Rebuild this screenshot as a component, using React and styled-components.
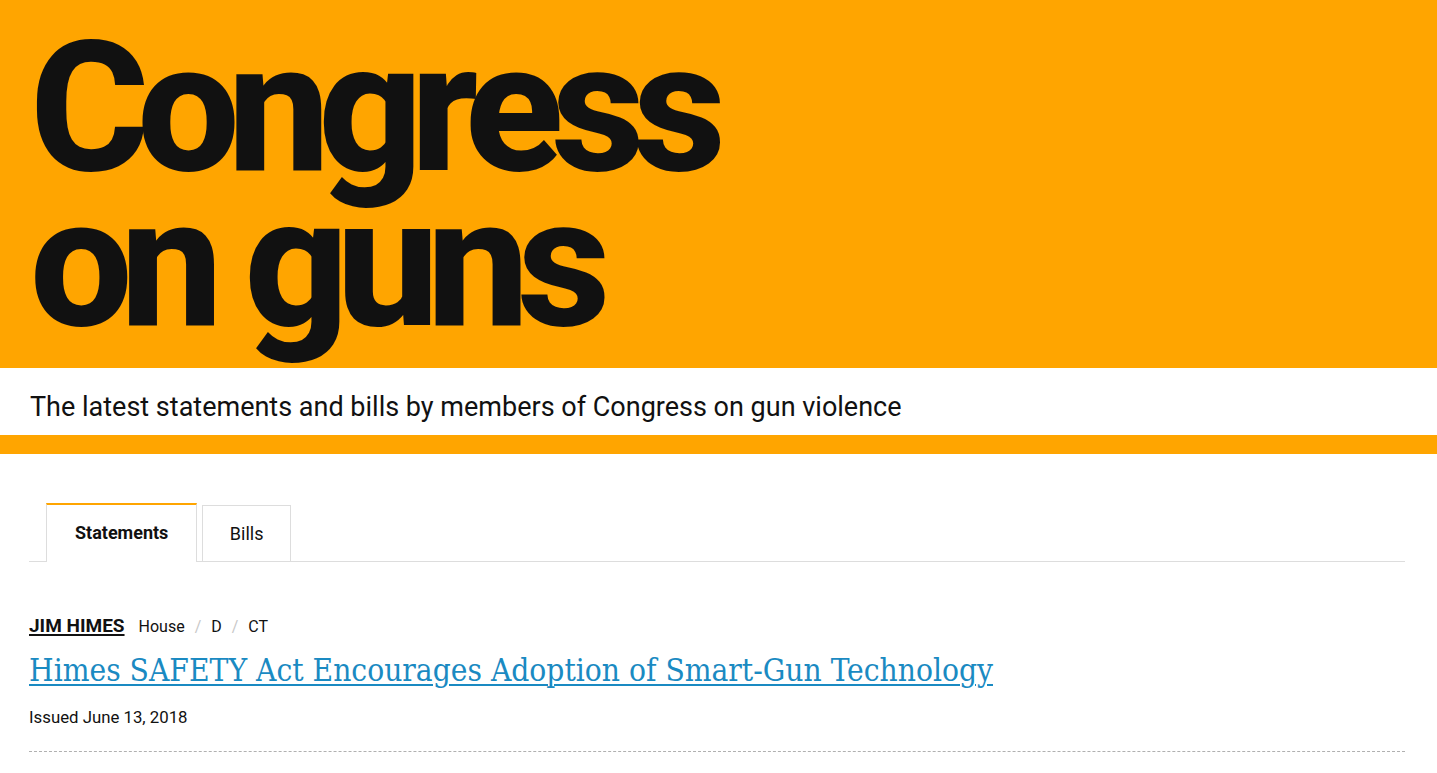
import React from "react";
import styled, { createGlobalStyle } from "styled-components";

const ORANGE = "#ffa500";
const INK = "#111111";

const GlobalStyle = createGlobalStyle`
  html, body { margin: 0; padding: 0; background: #ffffff; }
  body { font-family: Roboto, "Noto Sans", sans-serif; color: ${INK}; }
  * { box-sizing: border-box; }
`;

const Masthead = styled.header`
  background: ${ORANGE};
  height: 368px;
  padding: 30px 0 0 30px;
`;

const Title = styled.h1`
  margin: 0;
  font-family: Roboto, "Noto Sans", sans-serif;
  font-weight: 800;
  font-size: 182px;
  line-height: 155px;
  letter-spacing: -12px;
  color: ${INK};
`;

const Tagline = styled.div`
  background: #ffffff;
  border-bottom: 19px solid ${ORANGE};
  padding: 23px 0 12px 30px;
  font-family: Roboto, "Noto Sans", sans-serif;
  font-size: 27px;
  line-height: 32px;
  color: ${INK};
`;

const Main = styled.main`
  padding: 49px 32px 0 29px;
`;

const TabBar = styled.nav`
  display: flex;
  align-items: flex-end;
  gap: 5px;
  padding-left: 17px;
  border-bottom: 1px solid #dddddd;
`;

const Tab = styled.button`
  display: flex;
  align-items: center;
  justify-content: center;
  height: ${(p) => (p.$active ? "59px" : "56px")};
  margin-bottom: ${(p) => (p.$active ? "-1px" : "0")};
  padding: ${(p) => (p.$active ? "0 28px 2px" : "0 26.5px")};
  background: #ffffff;
  border: 1px solid #dddddd;
  border-top: ${(p) => (p.$active ? `2px solid ${ORANGE}` : "1px solid #dddddd")};
  border-bottom: none;
  font-family: Roboto, "Noto Sans", sans-serif;
  font-size: 18px;
  font-weight: ${(p) => (p.$active ? 700 : 400)};
  color: ${INK};
  cursor: pointer;
`;

const Item = styled.article`
  margin-top: 52px;
  padding-bottom: 24px;
  border-bottom: 1px dashed #b0b0b0;
`;

const Meta = styled.div`
  display: flex;
  align-items: baseline;
  font-family: Roboto, "Noto Sans", sans-serif;
  font-size: 16px;
  line-height: 24px;
  color: ${INK};
`;

const Member = styled.a`
  font-size: 19px;
  font-weight: 700;
  color: ${INK};
  text-decoration: underline;
  text-decoration-thickness: 2px;
  text-underline-offset: 2px;
  margin-right: 14px;
`;

const Sep = styled.span`
  color: #c8c8c8;
  margin: 0 10px;
`;

const Headline = styled.a`
  display: block;
  margin-top: 12px;
  font-family: "DejaVu Serif Condensed", "DejaVu Serif", serif;
  font-stretch: condensed;
  font-size: 31.4px;
  line-height: 38px;
  color: #1a8ac2;
  text-decoration: underline;
  text-decoration-thickness: 2px;
  text-underline-offset: 3px;
`;

const Issued = styled.div`
  margin-top: 18px;
  font-family: Roboto, "Noto Sans", sans-serif;
  font-size: 16.8px;
  line-height: 20px;
  color: ${INK};
`;

export default function App() {
  return (
    <>
      <GlobalStyle />
      <Masthead>
        <Title>
          Congress
          <br />
          on guns
        </Title>
      </Masthead>
      <Tagline>The latest statements and bills by members of Congress on gun violence</Tagline>
      <Main>
        <TabBar>
          <Tab $active>Statements</Tab>
          <Tab>Bills</Tab>
        </TabBar>
        <Item>
          <Meta>
            <Member href="#">JIM HIMES</Member>
            <span>House</span>
            <Sep>/</Sep>
            <span>D</span>
            <Sep>/</Sep>
            <span>CT</span>
          </Meta>
          <Headline href="#">Himes SAFETY Act Encourages Adoption of Smart-Gun Technology</Headline>
          <Issued>Issued June 13, 2018</Issued>
        </Item>
      </Main>
    </>
  );
}
